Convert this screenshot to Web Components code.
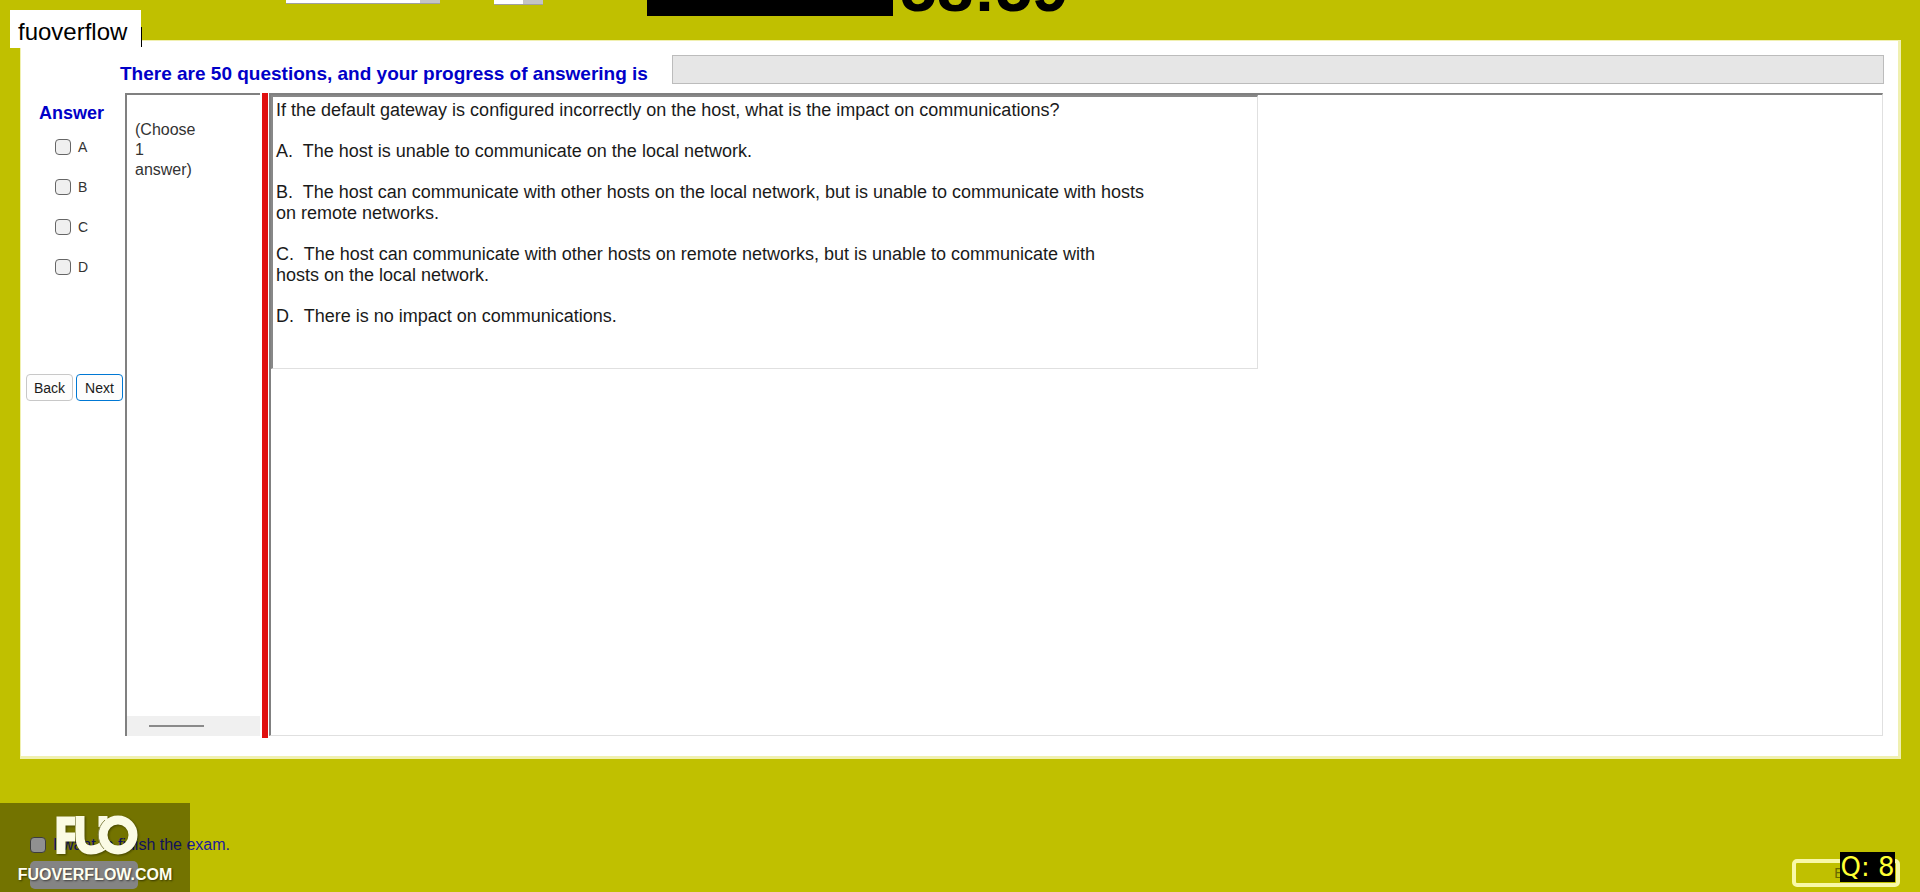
<!DOCTYPE html>
<html lang="en">
<head>
<meta charset="utf-8">
<title>Exam client</title>
<style>
html,body{margin:0;height:100%}
body{background:#c0c000;font-family:"Liberation Sans",Arial,sans-serif;font-size:16px;color:#1a1a1a}
</style>
</head>
<body>
<exam-app></exam-app>
<script>
const define = (name, html) => customElements.define(name, class extends HTMLElement {
  constructor() {
    super();
    const t = document.createElement('template');
    t.innerHTML = html;
    this.attachShadow({mode: 'open'}).append(t.content.cloneNode(true));
  }
});

customElements.define('answer-option', class extends HTMLElement {
  constructor() {
    super();
    this.attachShadow({mode: 'open'}).innerHTML = `
<style>
:host{display:block}
label{display:flex;align-items:center;gap:7px}
input{appearance:none;box-sizing:border-box;width:16px;height:16px;margin:0;border:1px solid #666;border-radius:4px;background:#f0f0f0;flex:none}
input:checked{background:#0067c0}
</style>
<label><input type="checkbox"><slot></slot></label>`;
  }
});

define('exam-clock', `
<style>
:host{display:flex;height:40px;overflow:hidden;align-items:flex-start;box-sizing:border-box;padding-left:286px}
select{appearance:none;box-sizing:border-box;margin:0;border:0;border-bottom:1px solid #a0a0a0;border-radius:0;padding:0;background:linear-gradient(90deg,transparent calc(100% - 20px),#c4c4c4 0) #fff;font:inherit;color:transparent}
.font{width:154px;height:4px}
.size{width:49px;height:5px;margin-left:54px}
.mask{width:246px;height:16px;margin-left:104px;background:#000}
time{font-weight:bold;font-size:66px;line-height:60px;margin-top:-42px;margin-left:7px;color:#000}
</style>
<select class="font" aria-label="Font"></select>
<select class="size" aria-label="Size"></select>
<div class="mask"></div>
<time>58:59</time>`);

define('answer-panel', `
<style>
:host{display:flex;flex-direction:column;width:104px;flex:none;box-sizing:border-box;padding:10px 0 0 5px;font-size:14px}
h2{margin:0 0 16px 13px;font-size:18px;line-height:20px;color:#0000c8}
.options{display:flex;flex-direction:column;gap:24px;padding-left:29px;line-height:16px;color:#333}
nav{display:flex;gap:3px;margin-top:99px}
button{box-sizing:border-box;height:27px;width:47px;padding:0;border:1px solid #c8c8c8;border-radius:4px;background:#fdfdfd;font:inherit;color:#1a1a1a}
.next{border-color:#0078d4}
</style>
<h2>Answer</h2>
<div class="options">
<answer-option>A</answer-option><answer-option>B</answer-option><answer-option>C</answer-option><answer-option>D</answer-option>
</div>
<nav><button type="button">Back</button><button type="button" class="next">Next</button></nav>`);

define('choice-hint', `
<style>
:host{display:flex;flex-direction:column;width:135px;flex:none;box-sizing:border-box;border:2px solid #808080;border-right:0;border-bottom:0}
p{margin:0;padding:25px 63px 0 8px;line-height:20px;flex:1;color:#333}
.bar{height:20px;background:#f0f0f0;display:flex;align-items:center;padding-left:22px}
.thumb{width:55px;height:2px;background:#8a8a8a}
</style>
<p><slot></slot></p><div class="bar"><div class="thumb"></div></div>`);

define('question-view', `
<style>
:host{display:block;flex:1;box-sizing:border-box;border:1px solid #e0e0e0;border-top:2px solid #808080;border-left:2px solid #808080}
article{box-sizing:border-box;width:calc(61% + 4px);min-height:274px;border:1px solid #e0e0e0;border-top:2px solid #888;border-left:2px solid #888;padding:3px 60px 0 3px;display:flex;flex-direction:column;gap:20px;font-size:18px;line-height:21px}
::slotted(p){margin:0}
</style>
<article><slot></slot></article>`);

define('fuo-watermark', `
<style>
:host{position:absolute;left:0;bottom:0;width:190px;height:89px;background:rgba(0,0,0,.4);color:#fffff0;display:flex;flex-direction:column;align-items:center;box-sizing:border-box;padding-top:12px}
svg{display:block;width:82px;height:40px;margin-left:4px;filter:drop-shadow(1px 1px 1px #0006)}
span{font:bold 16px/22px "Liberation Sans",sans-serif;margin-top:9px;text-shadow:1px 1px 2px #0008}
</style>
<svg viewBox="0 0 82 40" fill="none" stroke="#fbfbe4" stroke-width="9"><path d="M5 39V6H19M5 22H19"/><path d="M24 1V21Q24 35 35 35Q44 35 50 28M47 1V12"/><circle cx="62" cy="20" r="15"/><path d="M48 34A20 20 0 0 1 49 5" stroke="#8a8a50" stroke-width="1"/></svg>
<span>FUOVERFLOW.COM</span>`);

define('exam-footer', `
<style>
:host{position:relative;display:flex;justify-content:space-between;flex:1;box-sizing:border-box;padding:76px 20px 0 30px}
.finish{display:flex;flex-direction:column;gap:6px;color:#1c1c9c}
.finish answer-option{line-height:20px}
.end{height:28px;width:108px;border:0;border-radius:5px;background:#ddd;font:14px "Liberation Sans",sans-serif;color:#999}
.exit{box-sizing:border-box;width:108px;height:28px;margin-top:24px;border:4px solid #f8f8a8;border-radius:5px;background:transparent;padding:0;font:14px "Liberation Sans",sans-serif;color:#686800}
output{position:absolute;right:25px;bottom:10px;width:55px;height:30px;background:#000;color:#ff3;font:26px/30px "DejaVu Sans",sans-serif;text-align:center;white-space:nowrap}
</style>
<div class="finish"><answer-option>I want to finish the exam.</answer-option><button type="button" class="end" aria-label="Finish"></button></div>
<button type="button" class="exit">Exit</button>
<output>Q: 8</output>
<fuo-watermark></fuo-watermark>`);

define('name-tag', `
<style>
:host{position:absolute;left:10px;top:10px;width:131px;height:38px;box-sizing:border-box;padding-left:8px;background:#fff;color:#000;font-size:24px;line-height:44px}
i{position:absolute;right:-1px;top:17px;width:1px;height:20px;background:#000}
</style>
<slot></slot><i></i>`);

define('exam-app', `
<style>
:host{position:relative;display:flex;flex-direction:column;min-height:100vh;overflow:hidden}
main{margin:0 19px 0 20px;box-sizing:border-box;background:#fff;border:1px solid #f0f0b0;border-right:3px solid #f0f0b0;border-bottom:3px solid #f0f0b0;padding:14px 14px 20px 0}
header{display:flex;align-items:center;height:29px;gap:20px;padding-left:99px;margin-bottom:9px}
h1{margin:0;padding-top:8px;font-size:19px;line-height:20px;color:#0000c8;white-space:nowrap;width:532px;flex:none}
.progress{flex:1;height:100%;box-sizing:border-box;border:1px solid #bcbcbc;background:#e6e6e6}
.work{display:flex;height:643px;margin-right:1px}
.split{width:6px;margin:0 1px 0 2px;height:645px;background:#e01010;flex:none}
</style>
<exam-clock></exam-clock>
<main>
<header><h1>There are 50 questions, and your progress of answering is</h1><div class="progress" role="progressbar" aria-label="Progress" aria-valuenow="0"></div></header>
<div class="work">
<answer-panel></answer-panel>
<choice-hint>(Choose 1<br>answer)</choice-hint>
<div class="split"></div>
<question-view>
<p>If the default gateway is configured incorrectly on the host, what is the impact on communications?</p>
<p>A.&nbsp; The host is unable to communicate on the local network.</p>
<p>B.&nbsp; The host can communicate with other hosts on the local network, but is unable to communicate with hosts<br>on remote networks.</p>
<p>C.&nbsp; The host can communicate with other hosts on remote networks, but is unable to communicate with<br>hosts on the local network.</p>
<p>D.&nbsp; There is no impact on communications.</p>
</question-view>
</div>
</main>
<exam-footer></exam-footer>
<name-tag>fuoverflow</name-tag>`);
</script>
</body>
</html>
